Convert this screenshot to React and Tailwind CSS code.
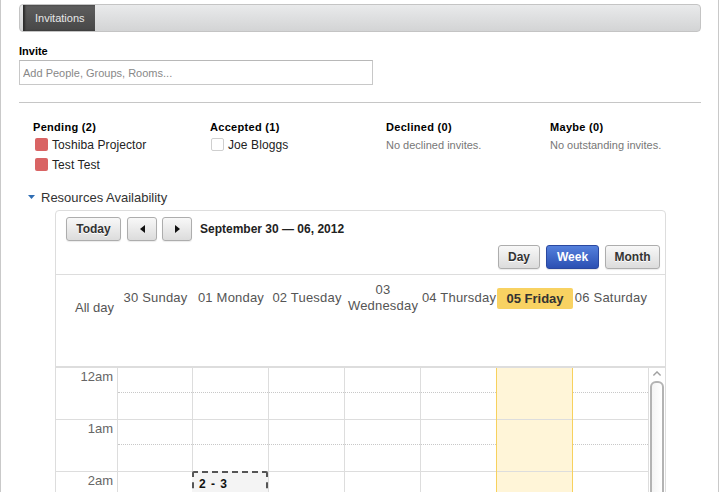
import React from "react";

const btn =
  "h-[24px] rounded-[3px] border border-[#adadad] bg-gradient-to-b from-[#f8f8f8] to-[#dcdcdc] text-[12px] font-bold text-[#333] [text-shadow:0_1px_0_#fff] shadow-[0_1px_1px_rgba(0,0,0,0.08)] flex items-center justify-center";

function HourRows({ today, dotted = true }) {
  return (
    <>
      {[0, 1, 2].map((i) => (
        <div key={i} className="h-[52px] border-b border-[#dddddd]">
          {dotted && !today ? (
            <div className="h-[25px] border-b border-dotted border-[#c8c8c8]" />
          ) : null}
        </div>
      ))}
    </>
  );
}

export default function App() {
  const days = [
    { label: "30 Sunday", w: "w-[75px]" },
    { label: "01 Monday", w: "w-[76px]" },
    { label: "02 Tuesday", w: "w-[76px]" },
    { label: "03 Wednesday", w: "w-[76px]", two: true },
    { label: "04 Thursday", w: "w-[76px]" },
    { label: "05 Friday", w: "w-[76px]", today: true },
    { label: "06 Saturday", w: "w-[76px]" },
  ];

  return (
    <div className="w-[720px] h-[492px] overflow-hidden bg-white font-['Liberation_Sans',Arial,sans-serif]">
      <div className="w-[719px] h-full border-x border-[#c9c9c9] pl-[18px] pr-[17px] pt-[4px]">
        {/* Tab bar */}
        <div className="h-[28px] rounded-[4px] border border-[#c4c4c4] bg-gradient-to-b from-[#e9eaeb] to-[#d3d4d5] pl-[3px] flex">
          <div className="h-full w-[72px] bg-gradient-to-b from-[#5e5e5e] to-[#474747] shadow-[inset_2px_0_2px_#2c2c2c] pl-[12px] flex items-center text-[11px] text-[#e8e8e8]">
            Invitations
          </div>
        </div>

        {/* Invite */}
        <div className="mt-[12px] h-[14px] leading-[14px] text-[11px] font-bold text-black">Invite</div>
        <input
          className="mt-[2px] block h-[25px] w-[354px] border border-[#c8c8c8] border-t-[#b8b8b8] bg-white px-[3px] text-[11px] text-[#333] outline-none placeholder:text-[#888]"
          placeholder="Add People, Groups, Rooms..."
        />

        <div className="mt-[17px] h-px bg-[#c6c6c6]" />

        {/* Status columns */}
        <div className="mt-[17px] pl-[14px] grid grid-cols-[177px_176px_164px_1fr]">
          <div>
            <div className="h-[14px] leading-[14px] text-[11px] font-bold tracking-[0.3px] text-black">Pending (2)</div>
            <div className="h-[20px] pt-[1px] flex items-center pl-[2px]">
              <span className="w-[13px] h-[13px] rounded-[2px] bg-[#d96464]" />
              <span className="ml-[4px] text-[12px] tracking-[0.1px] text-[#222]">Toshiba Projector</span>
            </div>
            <div className="h-[20px] pt-[1px] flex items-center pl-[2px]">
              <span className="w-[13px] h-[13px] rounded-[2px] bg-[#d96464]" />
              <span className="ml-[4px] text-[12px] tracking-[0.1px] text-[#222]">Test Test</span>
            </div>
          </div>
          <div>
            <div className="h-[14px] leading-[14px] text-[11px] font-bold tracking-[0.3px] text-black">Accepted (1)</div>
            <div className="h-[20px] pt-[1px] flex items-center pl-[1px]">
              <span className="w-[13px] h-[13px] rounded-[2px] border border-[#cfcfcf] bg-white" />
              <span className="ml-[4px] text-[12px] tracking-[0.1px] text-[#222]">Joe Bloggs</span>
            </div>
          </div>
          <div>
            <div className="h-[14px] leading-[14px] text-[11px] font-bold tracking-[0.3px] text-black">Declined (0)</div>
            <div className="h-[20px] pt-[3px] flex items-center text-[11px] text-[#777]">No declined invites.</div>
          </div>
          <div>
            <div className="h-[14px] leading-[14px] text-[11px] font-bold tracking-[0.3px] text-black">Maybe (0)</div>
            <div className="h-[20px] pt-[3px] flex items-center text-[11px] text-[#777]">No outstanding invites.</div>
          </div>
        </div>

        {/* Resources Availability */}
        <div className="mt-[16px] h-[16px] flex items-center pl-[9px]">
          <svg width="7" height="5" viewBox="0 0 7 5" className="mt-[-1px]">
            <polygon points="0,0 7,0 3.5,4" fill="#2f6db3" />
          </svg>
          <span className="ml-[6px] text-[13px] text-[#333]">Resources Availability</span>
        </div>

        {/* Calendar */}
        <div className="mt-[4px] ml-[36px] w-[611px] border border-[#dddddd] rounded-t-[4px]">
          {/* Toolbar */}
          <div className="pt-[6px] pb-[5px] border-b border-[#dddddd]">
            <div className="h-[24px] flex items-center pl-[10px]">
              <div className={`${btn} w-[55px]`}>Today</div>
              <div className={`${btn} w-[30px] ml-[6px]`}>
                <svg width="5" height="8" viewBox="0 0 5 8">
                  <polygon points="5,0 5,8 0,4" fill="#111" />
                </svg>
              </div>
              <div className={`${btn} w-[30px] ml-[5px]`}>
                <svg width="5" height="8" viewBox="0 0 5 8">
                  <polygon points="0,0 0,8 5,4" fill="#111" />
                </svg>
              </div>
              <div className="ml-[8px] text-[12px] font-bold text-[#222]">September 30 — 06, 2012</div>
            </div>
            <div className="mt-[4px] h-[24px] flex justify-end pr-[5px] gap-[6px]">
              <div className={`${btn} w-[42px]`}>Day</div>
              <div className="h-[24px] w-[53px] rounded-[3px] border border-[#2a48a0] bg-gradient-to-b from-[#5580dc] to-[#2c50b3] text-[12px] font-bold text-white flex items-center justify-center shadow-[0_1px_1px_rgba(0,0,0,0.1)]">
                Week
              </div>
              <div className={`${btn} w-[55px]`}>Month</div>
            </div>
          </div>

          {/* Header */}
          <div className="h-[93px] border-b-2 border-[#dddddd] flex">
            <div className="w-[62px] pt-[25px] pr-[4px] text-right text-[13px] leading-[16px] text-[#555]">All day</div>
            {days.map((d) => (
              <div key={d.label} className={`${d.w} h-[46px] flex items-center justify-center`}>
                {d.today ? (
                  <div className="w-[76px] h-[21px] mt-[1px] rounded-[2px] bg-[#f8d262] flex items-center justify-center text-[13px] font-bold text-[#333]">
                    {d.label}
                  </div>
                ) : d.two ? (
                  <div className="text-center text-[13px] leading-[16px] tracking-[0.2px] text-[#555]">
                    03
                    <br />
                    Wednesday
                  </div>
                ) : (
                  <div className="text-[13px] tracking-[0.2px] text-[#555] whitespace-nowrap">{d.label}</div>
                )}
              </div>
            ))}
          </div>

          {/* Body */}
          <div className="flex h-[140px]">
            <div className="w-[62px] border-r border-[#dddddd]">
              {["12am", "1am", "2am"].map((t) => (
                <div key={t} className="h-[52px] border-b border-[#dddddd] pr-[4px] pt-[1px] text-right text-[13px] leading-[16px] text-[#666]">
                  {t}
                </div>
              ))}
            </div>
            {days.map((d, i) => (
              <div
                key={d.label}
                className={`relative ${i === 0 ? "w-[75px]" : "w-[76px]"} border-r ${
                  i === 4 || i === 5 ? "border-[#f7d15d]" : "border-[#dddddd]"
                } ${d.today ? "bg-[#fff5d8]" : ""}`}
              >
                <HourRows today={d.today} />
                {i === 1 ? (
                  <div className="absolute left-[-1px] top-[103px] w-[76px] h-[40px] border-2 border-dashed border-[#555] rounded-[2px] bg-[#f4f4f4] pl-[5px] pt-[2px] text-[12px] font-bold tracking-[1px] text-[#111]">
                    2 - 3
                  </div>
                ) : null}
              </div>
            ))}
            <div className="w-[16px] flex flex-col items-center">
              <svg width="10" height="6" viewBox="0 0 10 6" className="mt-[3px]">
                <polyline points="1,5 5,1 9,5" fill="none" stroke="#a0a0a0" strokeWidth="1.5" />
              </svg>
              <div className="mt-[5px] w-[14px] h-[140px] rounded-[6px] border-2 border-[#b3b3b3] bg-gradient-to-r from-[#f4f4f4] to-white" />
            </div>
          </div>
        </div>
      </div>
    </div>
  );
}
